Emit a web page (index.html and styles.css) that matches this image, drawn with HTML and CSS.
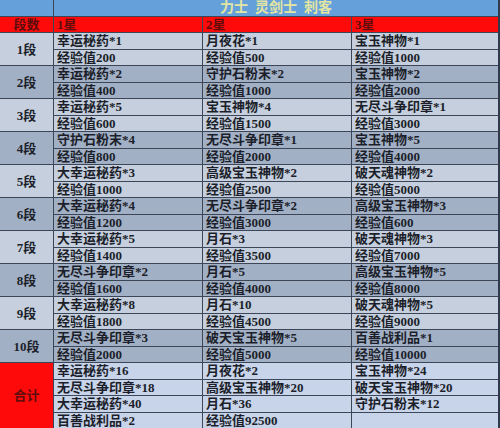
FILE: index.html
```html
<!DOCTYPE html>
<html lang="zh">
<head>
<meta charset="utf-8">
<title>力士 灵剑士 刺客</title>
<link rel="stylesheet" href="styles.css">
</head>
<body>
<div class="sheet">
  <div class="cell title-blank"></div>
  <div class="cell title">力士&nbsp;&nbsp;灵剑士&nbsp;&nbsp;刺客</div>

  <div class="cell head center">段数</div>
  <div class="cell head">1星</div>
  <div class="cell head">2星</div>
  <div class="cell head">3星</div>

  <div class="cell seg light">1段</div>
  <div class="cell light">幸运秘药*1</div><div class="cell light">月夜花*1</div><div class="cell light">宝玉神物*1</div>
  <div class="cell light">经验值200</div><div class="cell light">经验值500</div><div class="cell light">经验值1000</div>

  <div class="cell seg dark">2段</div>
  <div class="cell dark">幸运秘药*2</div><div class="cell dark">守护石粉末*2</div><div class="cell dark">宝玉神物*2</div>
  <div class="cell dark">经验值400</div><div class="cell dark">经验值1000</div><div class="cell dark">经验值2000</div>

  <div class="cell seg light">3段</div>
  <div class="cell light">幸运秘药*5</div><div class="cell light">宝玉神物*4</div><div class="cell light">无尽斗争印章*1</div>
  <div class="cell light">经验值600</div><div class="cell light">经验值1500</div><div class="cell light">经验值3000</div>

  <div class="cell seg dark">4段</div>
  <div class="cell dark">守护石粉末*4</div><div class="cell dark">无尽斗争印章*1</div><div class="cell dark">宝玉神物*5</div>
  <div class="cell dark">经验值800</div><div class="cell dark">经验值2000</div><div class="cell dark">经验值4000</div>

  <div class="cell seg light">5段</div>
  <div class="cell light">大幸运秘药*3</div><div class="cell light">高级宝玉神物*2</div><div class="cell light">破天魂神物*2</div>
  <div class="cell light">经验值1000</div><div class="cell light">经验值2500</div><div class="cell light">经验值5000</div>

  <div class="cell seg dark">6段</div>
  <div class="cell dark">大幸运秘药*4</div><div class="cell dark">无尽斗争印章*2</div><div class="cell dark">高级宝玉神物*3</div>
  <div class="cell dark">经验值1200</div><div class="cell dark">经验值3000</div><div class="cell dark">经验值600</div>

  <div class="cell seg light">7段</div>
  <div class="cell light">大幸运秘药*5</div><div class="cell light">月石*3</div><div class="cell light">破天魂神物*3</div>
  <div class="cell light">经验值1400</div><div class="cell light">经验值3500</div><div class="cell light">经验值7000</div>

  <div class="cell seg dark">8段</div>
  <div class="cell dark">无尽斗争印章*2</div><div class="cell dark">月石*5</div><div class="cell dark">高级宝玉神物*5</div>
  <div class="cell dark">经验值1600</div><div class="cell dark">经验值4000</div><div class="cell dark">经验值8000</div>

  <div class="cell seg light">9段</div>
  <div class="cell light">大幸运秘药*8</div><div class="cell light">月石*10</div><div class="cell light">破天魂神物*5</div>
  <div class="cell light">经验值1800</div><div class="cell light">经验值4500</div><div class="cell light">经验值9000</div>

  <div class="cell seg dark">10段</div>
  <div class="cell dark">无尽斗争印章*3</div><div class="cell dark">破天宝玉神物*5</div><div class="cell dark">百善战利品*1</div>
  <div class="cell dark">经验值2000</div><div class="cell dark">经验值5000</div><div class="cell dark">经验值10000</div>

  <div class="cell total-label">合计</div>
  <div class="cell total">幸运秘药*16</div><div class="cell total">月夜花*2</div><div class="cell total">宝玉神物*24</div>
  <div class="cell total">无尽斗争印章*18</div><div class="cell total">高级宝玉神物*20</div><div class="cell total">破天宝玉神物*20</div>
  <div class="cell total">大幸运秘药*40</div><div class="cell total">月石*36</div><div class="cell total">守护石粉末*12</div>
  <div class="cell total">百善战利品*2</div><div class="cell total">经验值92500</div><div class="cell total"></div>
</div>
</body>
</html>
```

FILE: styles.css
```css
html, body {
  margin: 0;
  padding: 0;
  background: #3c4656;
}

.sheet {
  width: 498px;
  height: 428px;
  border-right: 2px solid #2f3a4c;
  display: grid;
  grid-template-columns: 53px 148px 148px 146px;
  grid-template-rows: repeat(26, 1fr);
  gap: 1px;
  background: #3c4656;
  font-family: "Liberation Serif", "Noto Sans CJK SC", serif;
  font-weight: 700;
  font-size: 13px;
  color: #1c1f2a;
}

.cell {
  display: flex;
  align-items: center;
  padding-left: 3px;
  white-space: nowrap;
  overflow: hidden;
  line-height: 1;
}

.title-blank {
  background: #66a0da;
}

.title {
  grid-column: span 3;
  justify-content: center;
  background: #66a0da;
  color: #e2e6a2;
  font-size: 14px;
  padding-left: 0;
}

.head {
  background: #ff0a0a;
  color: #5e0c0c;
}

.center {
  justify-content: center;
  padding-left: 0;
}

.seg {
  grid-row: span 2;
  justify-content: center;
  padding-left: 0;
}

.light {
  background: #c5cfde;
}

.dark {
  background: #a2b0c6;
}

.total-label {
  grid-row: span 4;
  justify-content: center;
  padding-left: 0;
  background: #ff0a0a;
  color: #5e0c0c;
}

.total {
  background: #c8d4ea;
}
```
